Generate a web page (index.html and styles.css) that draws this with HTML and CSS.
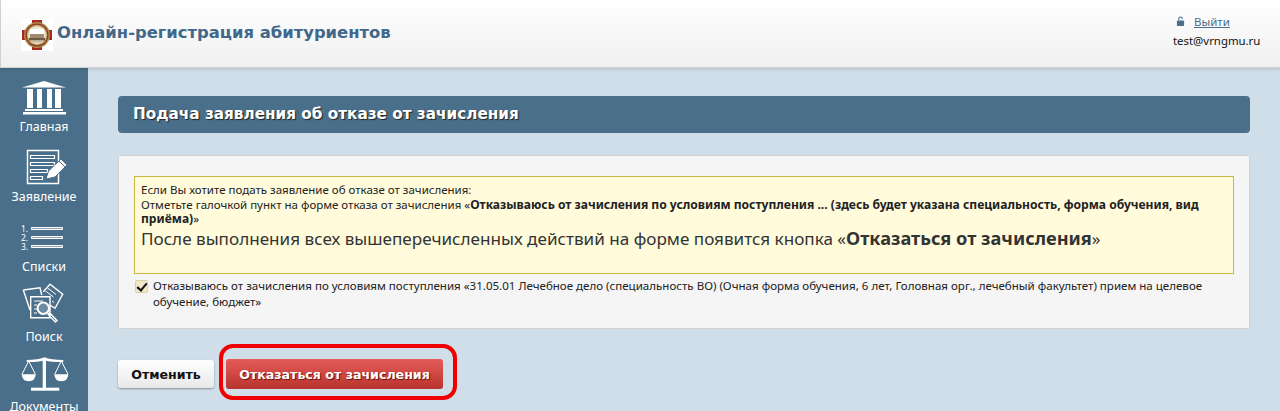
FILE: index.html
```html
<!DOCTYPE html>
<html lang="ru">
<head>
  <meta charset="UTF-8" />
  <title>Онлайн-регистрация абитуриентов</title>
  <link rel="stylesheet" href="styles.css">
</head>
<body>
  <header class="topbar">
    <div class="brand">
      <svg class="logo" viewBox="0 0 32 32">
        <rect width="32" height="32" fill="#fff"/>
        <path d="M11 1h10v5h-10zM11 26h10v5h-10zM1 11h5v10h-5zM26 11h5v10h-5z" fill="#a8281f"/>
        <circle cx="16" cy="16" r="13" fill="#a98f4f"/>
        <circle cx="16" cy="16" r="11.500" fill="#8c3a26"/>
        <circle cx="16" cy="16" r="10.200" fill="#c9b27a"/>
        <circle cx="16" cy="16" r="8.800" fill="#efe8d8"/>
        <path d="M9 10h14v5H9z" fill="#fff"/>
        <path d="M9 15h14v4H9z" fill="#a08a70"/>
        <path d="M8 19h16v2.500H8z" fill="#6e5a44"/>
        <path d="M10 21.500h12v2H10z" fill="#c8b89c"/>
      </svg>
      <span class="brand-title">Онлайн-регистрация абитуриентов</span>
    </div>
    <div class="account">
      <div class="logout">
        <svg class="lock" viewBox="0 0 10 11">
          <path d="M2.500 5V3a2.500 2.500 0 0 1 5 0v.5H6.300V3a1.300 1.300 0 0 0-2.600 0v2z" fill="#4a6f8a"/>
          <rect x="1" y="5" width="8" height="6" rx="1" fill="#4a6f8a"/>
        </svg>
        <a href="#">Выйти</a>
      </div>
      <div class="email">test@vrngmu.ru</div>
    </div>
  </header>

  <div class="layout">
    <nav class="sidebar">
      <a class="nav-item" href="#">
        <svg class="nav-icon" viewBox="0 0 46 38">
          <path d="M1 9.500 23 3l22 6.500z" fill="#fff"/>
          <path d="M6 11h6v19H6zM16 11h5v19h-5zM26 11h5v19h-5zM34 11h6v19h-6z" fill="#fff"/>
          <path d="M4 31h38v2H4z" fill="#fff"/>
          <path d="M2 34h43v2.500H2z" fill="#fff"/>
        </svg>
        <span>Главная</span>
      </a>
      <a class="nav-item" href="#">
        <svg class="nav-icon" viewBox="0 0 46 38">
          <path d="M6.500 2.500h31v33h-31z" fill="none" stroke="#fff" stroke-width="1.500"/>
          <path d="M9.500 7.500h24v3h-24zM9.500 14.500h24v3h-24zM9.500 21.500h17v3h-17zM9.500 28.500h12v3h-12z" fill="none" stroke="#fff" stroke-width="1.200"/>
          <path d="M25 31l2.500-8L40 11l6 6-12 12z" fill="#fff" stroke="#4a6f8a"/>
          <path d="M38 13l6 6" stroke="#4a6f8a"/>
        </svg>
        <span>Заявление</span>
      </a>
      <a class="nav-item" href="#">
        <svg class="nav-icon" viewBox="0 0 46 38">
          <text class="list-num" x="0" y="14">1.</text>
          <text class="list-num" x="0" y="23">2.</text>
          <text class="list-num" x="0" y="32">3.</text>
          <path d="M10.500 9.500h31v2h-31zM10.500 18.500h31v2h-31zM10.500 27.500h31v2h-31z" fill="#8fa6b6" stroke="#fff"/>
        </svg>
        <span>Списки</span>
      </a>
      <a class="nav-item" href="#">
        <svg class="nav-icon" viewBox="0 0 46 38">
          <path d="M2.300 2 19 -.3l1.700 7.300M9 22 2.300 2" fill="none" stroke="#fff" stroke-width="1.400"/>
          <path d="M22.300 3.700 29 -3.700 41.700 6.300 34 20.300 29 17" fill="none" stroke="#fff" stroke-width="1.400"/>
          <path d="M26 -.5l9 7M24.500 3l8 6M31 13l2 1.500" stroke="#fff"/>
          <path d="M9.700 8.700H29v21H9.700z" fill="#4a6f8a" stroke="#fff" stroke-width="1.400"/>
          <path d="M13 13h9M13 17h3M13 21h3M13 25h3" stroke="#fff"/>
          <circle cx="22.300" cy="20.300" r="5.700" fill="#6d8ca3" stroke="#fff" stroke-width="2"/>
          <path d="M27.300 25 35.700 33.700" stroke="#fff" stroke-width="3.500"/>
          <path d="M29.500 27.500 34.500 32.700" stroke="#4a6f8a" stroke-width="1"/>
        </svg>
        <span>Поиск</span>
      </a>
      <a class="nav-item" href="#">
        <svg class="nav-icon" viewBox="0 0 46 38">
          <path d="M5.700 2Q17 2 23.300 -.7 30 2 42.300 2v2Q30 4 23.300 2.500 17 4 5.700 4z" fill="#fff"/>
          <path d="M21.700 0H25v31h-3.300z" fill="#fff"/>
          <path d="M10 29.700h28.300v3H10z" fill="#fff"/>
          <path d="M.7 16.300h14q-.5 7-7 7t-7-7zM33.300 16.300h14q-.5 7-7 7t-7-7z" fill="#fff"/>
          <path d="M1 16.300 7.700 3l6.700 13.300M33.700 16.300 40.300 3 47 16.300" fill="none" stroke="#fff"/>
        </svg>
        <span>Документы</span>
      </a>
    </nav>

    <main class="content">
      <h1 class="page-title">Подача заявления об отказе от зачисления</h1>

      <section class="panel">
        <div class="notice">
          <div>Если Вы хотите подать заявление об отказе от зачисления:</div>
          <div>Отметьте галочкой пункт на форме отказа от зачисления «<b>Отказываюсь от зачисления по условиям поступления ... (здесь будет указана специальность, форма обучения, вид приёма)</b>»</div>
          <div class="notice-big">После выполнения всех вышеперечисленных действий на форме появится кнопка «<b>Отказаться от зачисления</b>»</div>
        </div>
        <label class="agree">
          <input type="checkbox" checked>
          <span>Отказываюсь от зачисления по условиям поступления «31.05.01 Лечебное дело (специальность ВО) (Очная форма обучения, 6 лет, Головная орг., лечебный факультет) прием на целевое обучение, бюджет»</span>
        </label>
      </section>

      <div class="actions">
        <button class="btn btn-cancel">Отменить</button>
        <div class="refuse-wrap">
          <button class="btn btn-refuse">Отказаться от зачисления</button>
          <div class="highlight"></div>
        </div>
      </div>
    </main>
  </div>
</body>
</html>
```

FILE: styles.css
```css
html, body {
  height: 100%;
}

body {
  font-family: "Noto Sans", sans-serif;
  background-color: #cfdee8;
  color: #222;
  margin: 0;
  overflow: hidden;
}

.topbar {
  display: flex;
  justify-content: space-between;
  height: 68px;
  box-sizing: border-box;
  background: linear-gradient(#ffffff, #f0f0f0);
  border-left: 1px solid #d0d0d0;
  border-bottom: 1px solid #d4d4d4;
  box-shadow: 0 1px 3px rgba(0,0,0,0.15);
  position: relative;
}

.brand {
  display: flex;
  align-items: center;
  padding-left: 20px;
}

.logo {
  width: 32px;
  height: 32px;
  margin-top: 3px;
}

.brand-title {
  margin: 0 0 3px 4px;
  font-family: "DejaVu Sans", sans-serif;
  font-size: 16.4px;
  font-weight: bold;
  color: #41688a;
}

.account {
  width: 107px;
  padding-top: 14px;
  font-size: 11.4px;
}

.logout {
  display: flex;
  align-items: center;
  height: 14px;
  margin-bottom: 5px;
}

.lock {
  width: 9px;
  height: 10px;
  margin: 0 9px 0 3px;
}

.logout a {
  color: #4a6f8a;
  font-size: 11.5px;
}

.email {
  color: #111;
}

.layout {
  display: flex;
}

.sidebar {
  width: 88px;
  height: 343px;
  flex-shrink: 0;
  background-color: #4a6f8a;
  overflow: hidden;
}

.nav-item {
  display: flex;
  flex-direction: column;
  align-items: center;
  height: 70px;
  padding-top: 10px;
  box-sizing: border-box;
  color: #fff;
  font-size: 12.5px;
  text-decoration: none;
}

.nav-icon {
  width: 46px;
  height: 38px;
  margin-bottom: 2px;
  overflow: visible;
}

.list-num {
  fill: #fff;
  font-size: 8.5px;
}

.content {
  flex: 1;
  padding: 28px 30px 0;
}

.page-title {
  margin: 0 0 22px;
  height: 37px;
  padding-left: 15px;
  border-radius: 4px;
  background-color: #4a6f8a;
  color: #fff;
  font-family: "DejaVu Sans", sans-serif;
  font-size: 15.26px;
  line-height: 37px;
  text-shadow: 1px 1px 1px #222;
}

.panel {
  height: 174px;
  box-sizing: border-box;
  padding: 20px 15px 0;
  background-color: #f5f5f5;
  border: 1px solid #d4d4d4;
  font-size: 11.5px;
}

.notice {
  height: 98px;
  box-sizing: border-box;
  padding: 6px 20px 6px 6px;
  background-color: #fffbdb;
  border: 1px solid #c9b53f;
  line-height: 14.5px;
}

.notice b {
  font-size: 12.1px;
}

.notice-big {
  font-size: 17.1px;
  line-height: 22px;
  color: #333;
}

.notice .notice-big b {
  font-size: 18.2px;
}

.agree {
  display: flex;
  gap: 5px;
  margin-top: 4px;
  line-height: 16px;
  font-size: 11.55px;
}

.agree input {
  appearance: none;
  position: relative;
  flex-shrink: 0;
  width: 13px;
  height: 13px;
  margin: 2px 0 0 1px;
  background-color: #f3e7c9;
  border: 1px solid #d9cfa8;
  border-radius: 2px;
}

.agree input::before {
  content: "";
  position: absolute;
  left: 3px;
  top: 0;
  width: 4px;
  height: 8px;
  border: solid #111;
  border-width: 0 2px 2px 0;
  transform: rotate(40deg);
}

.actions {
  display: flex;
  align-items: center;
  gap: 12px;
  margin-top: 30px;
}

.btn {
  border: none;
  border-radius: 3px;
  font-family: "DejaVu Sans", sans-serif;
  font-size: 12.6px;
  font-weight: bold;
}

.btn-cancel {
  width: 96px;
  height: 28px;
  background: linear-gradient(#ffffff, #e8e8e8);
  color: #111;
  box-shadow: 0 1px 2px rgba(0,0,0,0.35);
}

.refuse-wrap {
  position: relative;
}

.btn-refuse {
  display: block;
  width: 217px;
  height: 30px;
  background: linear-gradient(#e65b58, #b8332d);
  color: #fff;
  text-shadow: 1px 1px 1px #6a1410;
}

/* red annotation frame drawn over the screenshot */
.highlight {
  position: absolute;
  inset: -15px -14px -11px -7px;
  border: 4px solid #f00000;
  border-radius: 14px;
  pointer-events: none;
}
```
